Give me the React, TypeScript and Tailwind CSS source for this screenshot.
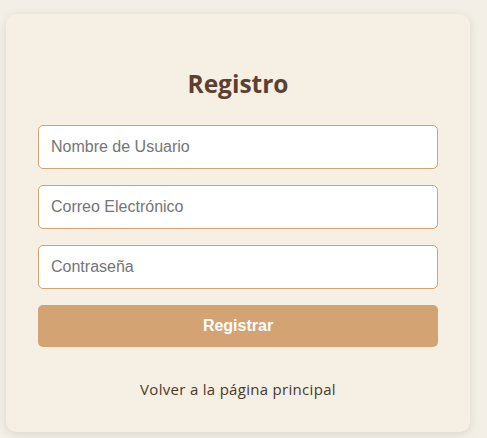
import React from "react";

export default function App() {
  return (
    <div className="min-h-[438px] w-full bg-[#f3efe6] pt-[14px] pl-[6px]">
      <div className="w-[464px] h-[418px] rounded-[10px] bg-[#f5efe4] shadow-[0_2px_10px_rgba(0,0,0,0.1)] px-[32px] pt-[55px]">
        <h2 className="text-center text-[24.5px] leading-[30px] font-bold text-[#5c4030] [font-family:'Open_Sans',sans-serif]">
          Registro
        </h2>
        <div className="mt-[26px] flex flex-col gap-[16px]">
          <input
            placeholder="Nombre de Usuario"
            className="h-[44px] w-full rounded-[5px] border border-[#d4a373] bg-white px-[12px] text-[16px] text-[#333] placeholder:text-[#757575] outline-none [font-family:'Liberation_Sans',Arial,sans-serif]"
          />
          <input
            placeholder="Correo Electrónico"
            className="h-[44px] w-full rounded-[5px] border border-[#d4a373] bg-white px-[12px] text-[16px] text-[#333] placeholder:text-[#757575] outline-none [font-family:'Liberation_Sans',Arial,sans-serif]"
          />
          <input
            placeholder="Contraseña"
            type="password"
            className="h-[44px] w-full rounded-[5px] border border-[#d4a373] bg-white px-[12px] text-[16px] text-[#333] placeholder:text-[#757575] outline-none [font-family:'Liberation_Sans',Arial,sans-serif]"
          />
          <button className="h-[42px] w-full rounded-[5px] bg-[#d4a373] text-[16px] font-bold text-white [font-family:'Liberation_Sans',Arial,sans-serif]">
            Registrar
          </button>
        </div>
        <p className="mt-[31px] text-center text-[15px] tracking-[0.3px] text-[#4a3a2c] [font-family:'Open_Sans',sans-serif]">
          Volver a la página principal
        </p>
      </div>
    </div>
  );
}
